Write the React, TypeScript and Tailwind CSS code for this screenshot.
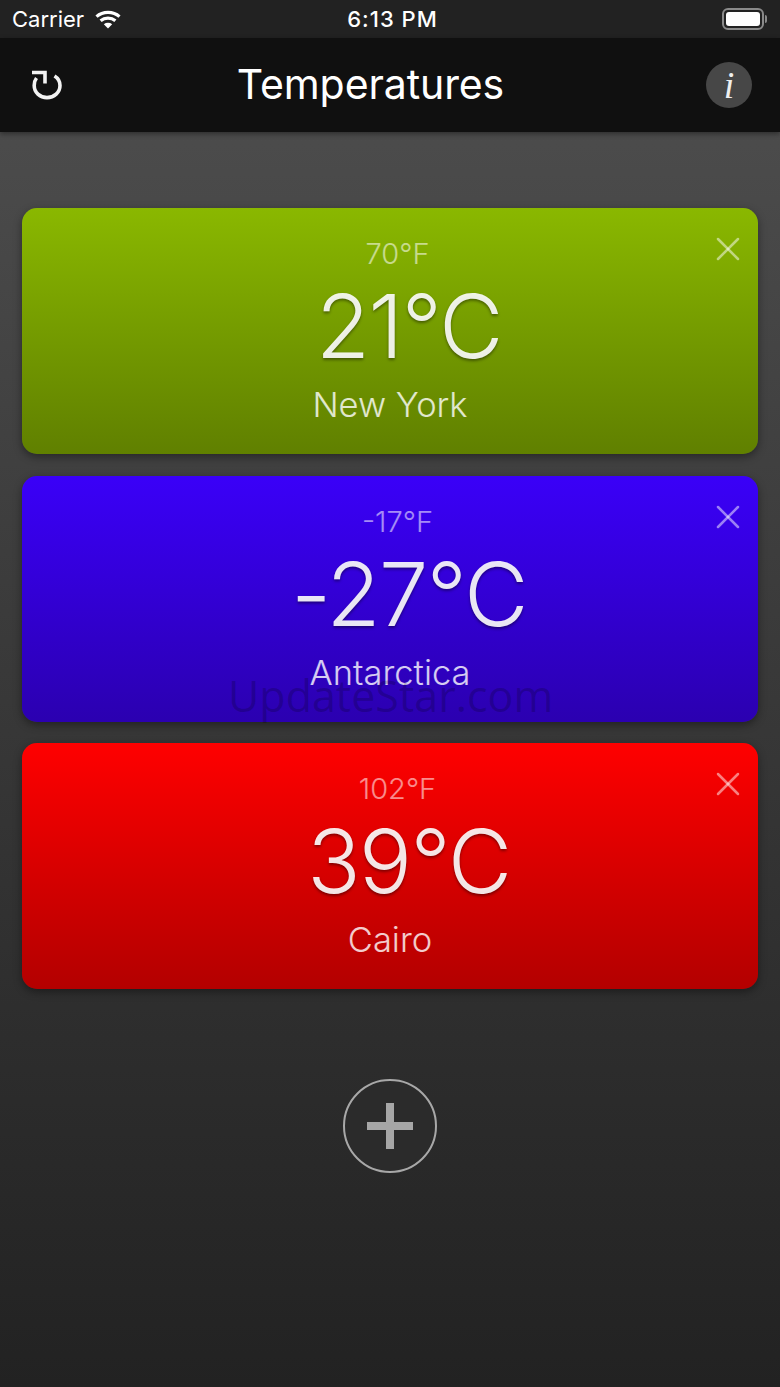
import { X } from "lucide-react";

type City = {
  fahrenheit: string;
  celsius: string;
  name: string;
  background: string;
};

const cities: City[] = [
  { fahrenheit: "70°F", celsius: "21°C", name: "New York", background: "bg-gradient-to-b from-[#8ab800] to-[#608000]" },
  { fahrenheit: "-17°F", celsius: "-27°C", name: "Antarctica", background: "bg-gradient-to-b from-[#3a00f8] to-[#2b00b0]" },
  { fahrenheit: "102°F", celsius: "39°C", name: "Cairo", background: "bg-gradient-to-b from-[#ff0000] to-[#b30000]" },
];

function WifiIcon() {
  return (
    <svg className="ml-[11px] h-[19px] w-[26px]" viewBox="0 0 26 19" fill="none" stroke="#fff" strokeWidth="3.2">
      <path d="M1.5 6.6C7.8 1 18.2 1 24.5 6.6" />
      <path d="M5.6 10.8C9.8 7.2 16.2 7.2 20.4 10.8" />
      <path d="M13 18.6L8.8 14.2C11.3 12.4 14.7 12.4 17.2 14.2Z" fill="#fff" stroke="none" />
    </svg>
  );
}

function BatteryIcon() {
  return (
    <div className="flex items-center">
      <div className="flex h-[22px] w-[42px] rounded-[6px] border-2 border-[#8a8a8a] p-[2px]">
        <div className="flex-1 rounded-[3px] bg-white" />
      </div>
      <div className="ml-px h-[8px] w-[2px] rounded-r-full bg-[#8a8a8a]" />
    </div>
  );
}

function RefreshIcon() {
  return (
    <svg className="h-[32px] w-[34px]" viewBox="0 0 34 32" fill="none" stroke="#f2f2f2" strokeWidth="3.6">
      <path d="M6.5 9C4.8 11.2 4.2 13.8 4.2 16.5C4.2 23.4 9.8 28.6 17 28.6C24.2 28.6 30 23.4 30 16.5C30 12.4 27.8 9 24.5 7" />
      <path d="M2 3.5H15V14.5" />
    </svg>
  );
}

function CityCard({ city }: { city: City }) {
  return (
    <div className={`relative flex h-[246px] flex-col items-center rounded-[15px] pt-[27px] font-['Inter',sans-serif] font-light shadow-[0_3px_9px_rgba(0,0,0,0.4)] ${city.background}`}>
      <div className="ml-[15px] text-[29px] leading-[38px] text-white/55">{city.fahrenheit}</div>
      <div className="ml-[38px] mt-px text-[88px] leading-[104px] tracking-[-1.5px] text-white/90 [text-shadow:0_2px_3px_rgba(0,0,0,0.4)]">{city.celsius}</div>
      <div className="mt-[4px] text-[34.5px] leading-[46px] text-white/80">{city.name}</div>
      <button className="absolute right-[10px] top-[21px] text-white/50" type="button">
        <X className="size-[40px]" strokeWidth={1.5} />
      </button>
    </div>
  );
}

export default function App() {
  return (
    <div className="relative flex h-[1387px] w-[780px] flex-col overflow-hidden bg-gradient-to-b from-[#505050] to-[#222222] text-white">
      <div className="flex h-[38px] items-center justify-between bg-[#222222] pl-3 pr-[13px] font-['Inter',sans-serif]">
        <div className="flex w-[200px] items-center text-[22px] font-normal">
          Carrier
          <WifiIcon />
        </div>
        <div className="ml-[6px] text-[22px] font-medium tracking-[1px]">6:13 PM</div>
        <div className="flex w-[200px] justify-end">
          <BatteryIcon />
        </div>
      </div>

      <header className="flex h-[94px] items-center justify-between bg-[#101010] pl-[30px] pr-[28px] shadow-[0_2px_5px_rgba(0,0,0,0.4)]">
        <RefreshIcon />
        <h1 className="ml-[-29px] font-['Inter',sans-serif] text-[41px] font-normal tracking-[-0.1px]">Temperatures</h1>
        <button className="flex size-[46px] items-center justify-center rounded-full bg-[#474747] font-['Liberation_Serif',serif] text-[38px] italic text-[#efefef]" type="button">
          i
        </button>
      </header>

      <main className="flex flex-col items-center px-[22px] pt-[76px]">
        <div className="flex w-full flex-col gap-[21.5px]">
          {cities.map((city) => (
            <CityCard city={city} key={city.name} />
          ))}
        </div>

        <button className="mt-[90px] flex size-[94px] items-center justify-center rounded-full border-2 border-[#a8a8a8] bg-[#2b2b2b]" type="button">
          <svg className="size-[46px]" viewBox="0 0 46 46" fill="#a6a6a6">
            <path d="M19 0H27V19H46V27H27V46H19V27H0V19H19Z" />
          </svg>
        </button>
      </main>

      <div className="absolute left-[228px] top-[666px] font-['Open_Sans',sans-serif] text-[43px] leading-[60px] text-black/20">UpdateStar.com</div>
    </div>
  );
}
